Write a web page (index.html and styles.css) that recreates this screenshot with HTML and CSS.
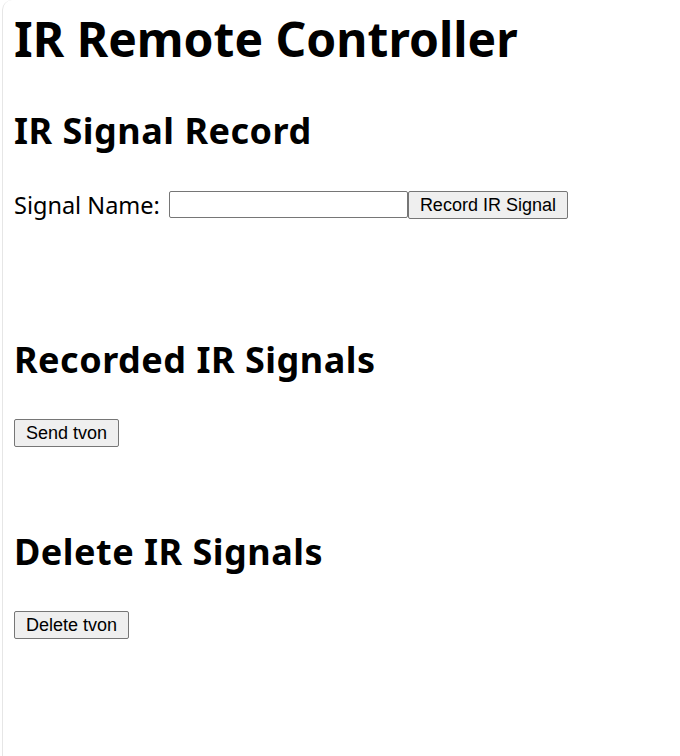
FILE: index.html
```html
<!DOCTYPE html>
<html lang="en">
<head>
<meta charset="utf-8">
<title>IR Remote Controller</title>
<link rel="stylesheet" href="styles.css">
</head>
<body>
<div class="frame">
  <h1 class="title">IR Remote Controller</h1>
  <h2 class="section-title first">IR Signal Record</h2>
  <div class="record-row">
    <label class="field-label" for="signal-name">Signal Name:</label>
    <input class="text-input" id="signal-name" type="text">
    <button class="btn" type="button">Record IR Signal</button>
  </div>
  <h2 class="section-title recorded">Recorded IR Signals</h2>
  <div class="button-list send-list">
    <button class="btn" type="button">Send tvon</button>
  </div>
  <h2 class="section-title delete">Delete IR Signals</h2>
  <div class="button-list delete-list">
    <button class="btn" type="button">Delete tvon</button>
  </div>
</div>
</body>
</html>
```

FILE: styles.css
```css
html, body {
  margin: 0;
  padding: 0;
  background: #ffffff;
  height: 100%;
}

body {
  font-family: "Noto Sans", "DejaVu Sans", sans-serif;
  color: #000000;
}

.frame {
  box-sizing: border-box;
  min-height: 100%;
  margin-left: 2px;
  padding: 6px 11px 0 11px;
  border-left: 1px solid #e6e6e6;
  border-top-left-radius: 10px;
}

.title {
  margin: 0;
  font-size: 48px;
  font-weight: 700;
  line-height: normal;
}

.section-title {
  margin: 0;
  font-size: 36px;
  font-weight: 700;
  line-height: normal;
  letter-spacing: 0.5px;
}

.section-title.first { margin-top: 35px; }
.section-title.recorded { margin-top: 114px; }
.section-title.delete { margin-top: 80px; }

.record-row {
  display: flex;
  align-items: center;
  margin-top: 33.5px;
}

.field-label {
  font-size: 23.5px;
  line-height: normal;
  margin-right: 9px;
}

.text-input {
  box-sizing: border-box;
  width: 239px;
  height: 27px;
  margin: 0;
  border: 1px solid #767676;
  border-radius: 2px;
  padding: 1px 2px;
  font-family: "Liberation Sans", Arial, sans-serif;
  font-size: 18px;
  background: #ffffff;
}

.btn {
  box-sizing: border-box;
  margin: 0;
  padding: 2px 11px;
  height: 28px;
  font-family: "Liberation Sans", Arial, sans-serif;
  font-size: 18px;
  line-height: 22px;
  color: #000000;
  background: #efefef;
  border: 1px solid #767676;
  border-radius: 2px;
}

.button-list {
  display: flex;
}

.send-list { margin-top: 35px; }
.delete-list { margin-top: 35px; }
```
